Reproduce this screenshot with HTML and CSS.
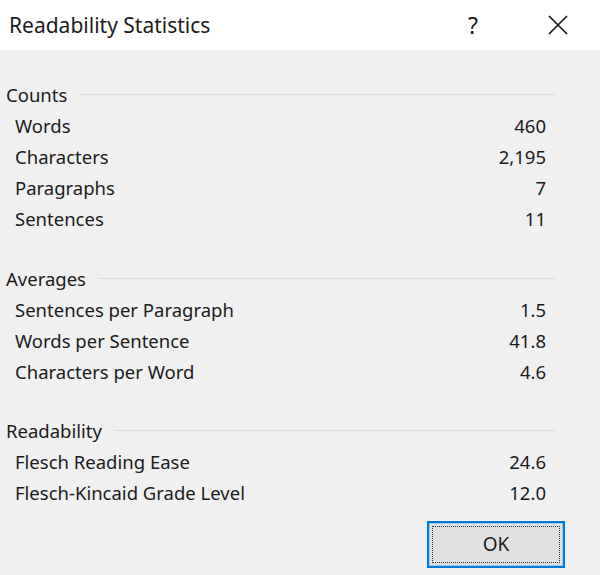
FILE: index.html
```html
<html>

<head>
    <title>Readability Statistics</title>
    <link rel="stylesheet" href="styles.css">
</head>

<body>
    <div class="dialog">
        <div class="title-bar">
            <span class="title">Readability Statistics</span>
            <span class="help">?</span>
            <span class="close">
                <svg width="20" height="20" viewBox="0 0 20 20">
                    <path d="M1 1 L19 19 M19 1 L1 19" stroke="#111" stroke-width="1.6" fill="none" />
                </svg>
            </span>
        </div>

        <div class="content">
            <div class="section">
                <div class="section-head"><span>Counts</span><div class="rule"></div></div>
                <div class="row"><span>Words</span><span>460</span></div>
                <div class="row"><span>Characters</span><span>2,195</span></div>
                <div class="row"><span>Paragraphs</span><span>7</span></div>
                <div class="row"><span>Sentences</span><span>11</span></div>
            </div>

            <div class="section">
                <div class="section-head"><span>Averages</span><div class="rule"></div></div>
                <div class="row"><span>Sentences per Paragraph</span><span>1.5</span></div>
                <div class="row"><span>Words per Sentence</span><span>41.8</span></div>
                <div class="row"><span>Characters per Word</span><span>4.6</span></div>
            </div>

            <div class="section">
                <div class="section-head"><span>Readability</span><div class="rule"></div></div>
                <div class="row"><span>Flesch Reading Ease</span><span>24.6</span></div>
                <div class="row"><span>Flesch-Kincaid Grade Level</span><span>12.0</span></div>
            </div>

            <div class="buttons">
                <button class="ok-button"><span class="focus">OK</span></button>
            </div>
        </div>
    </div>
</body>

</html>
```

FILE: styles.css
```css
html,
body {
    height: 100%;
    margin: 0;
}

body {
    font-family: 'Noto Sans', 'Open Sans', sans-serif;
    color: #1b1b1b;
    background-color: #f0f0f0;
}

.dialog {
    width: 600px;
    height: 575px;
    display: flex;
    flex-direction: column;
    overflow: hidden;
}

.title-bar {
    height: 50px;
    flex-shrink: 0;
    background-color: #ffffff;
    display: flex;
    align-items: center;
    padding-left: 9px;
    font-size: 21px;
}

.title {
    flex-grow: 1;
}

.help {
    width: 30px;
    text-align: center;
    margin-right: 60px;
    font-size: 23px;
}

.close {
    width: 20px;
    height: 20px;
    margin-right: 32px;
    display: flex;
}

.content {
    flex-grow: 1;
    display: flex;
    flex-direction: column;
    gap: 28.5px;
    padding-top: 29px;
    font-size: 18.5px;
}

.section-head {
    height: 31px;
    display: flex;
    align-items: center;
    padding-left: 6px;
    padding-right: 44px;
}

.rule {
    flex-grow: 1;
    height: 1px;
    margin-left: 12px;
    background-color: #dcdcdc;
}

.row {
    height: 31px;
    display: flex;
    align-items: center;
    justify-content: space-between;
    padding-left: 15px;
    padding-right: 54px;
}

.buttons {
    display: flex;
    justify-content: flex-end;
    padding-right: 35px;
    margin-top: -16px;
}

.ok-button {
    width: 138px;
    height: 47px;
    padding: 3px;
    border: 2px solid #0078d7;
    background-color: #e1e1e1;
    box-shadow: inset 0 0 0 1px #9cc8ef;
    font-family: inherit;
    font-size: 19px;
    color: #1b1b1b;
}

.focus {
    height: 100%;
    display: flex;
    align-items: center;
    justify-content: center;
    border: 1px dotted #333;
    box-sizing: border-box;
}
```
